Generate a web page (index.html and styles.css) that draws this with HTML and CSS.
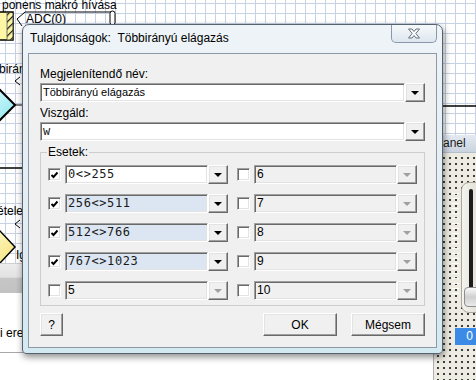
FILE: index.html
```html
<!DOCTYPE html>
<html lang="hu">
<head>
  <meta charset="UTF-8">
  <title>Tulajdonságok</title>
  <link rel="stylesheet" href="styles.css">
</head>
<body>
  <div class="desk">
    <!-- diagram sheet behind the dialog -->
    <div class="sheet">
      <svg class="diagram" width="476" height="263" viewBox="0 0 476 263">
        <defs>
          <pattern id="hatch" width="5" height="5" patternUnits="userSpaceOnUse" patternTransform="rotate(45)">
            <rect width="5" height="5" fill="#fdf6a4"/>
            <rect width="1.2" height="5" fill="#222"/>
          </pattern>
          <linearGradient id="cyan" x1="0" y1="0" x2="1" y2="1">
            <stop offset="0" stop-color="#d8fbfd"/>
            <stop offset="1" stop-color="#8fe6ef"/>
          </linearGradient>
          <linearGradient id="yellow" x1="0" y1="0" x2="1" y2="1">
            <stop offset="0" stop-color="#fffbd0"/>
            <stop offset="1" stop-color="#f5e27a"/>
          </linearGradient>
        </defs>
        <text class="dg-text" x="2" y="9">ponens makró hívása</text>
        <rect x="-3" y="12" width="16" height="28" fill="#fdf6a4" stroke="#000" stroke-width="1.5"/>
        <rect x="7" y="13" width="5.5" height="26.5" fill="url(#hatch)"/>
        <line x1="7" y1="12" x2="7" y2="40" stroke="#555" stroke-width="0.8"/>
        <path d="M22 26 L17 19 L25 12 L112 12" fill="none" stroke="#000" stroke-width="1"/>
        <rect x="110" y="11" width="5" height="14" rx="2.5" fill="#fff" stroke="#000" stroke-width="1"/>
        <text class="dg-text" x="26" y="23">ADC(0)</text>
        <text class="dg-text" x="-1" y="73">birán</text>
        <path d="M20 77 L15 81 L20 85" fill="none" stroke="#000" stroke-width="1"/>
        <polygon points="-15,105 0,90 15,105 0,120" fill="url(#cyan)" stroke="#000" stroke-width="2"/>
        <line x1="15" y1="105" x2="25" y2="105" stroke="#000" stroke-width="1"/>
        <line x1="0" y1="168" x2="25" y2="168" stroke="#000" stroke-width="1.5"/>
        <text class="dg-text" x="-3" y="215">ételes</text>
        <path d="M20 220 L15 224 L20 228" fill="none" stroke="#000" stroke-width="1"/>
        <polygon points="-16,247 0,231 15,247 0,263" fill="url(#yellow)" stroke="#000" stroke-width="1.5"/>
        <text class="dg-text" x="16" y="259">Ig</text>
        <line x1="436" y1="106" x2="476" y2="106" stroke="#000" stroke-width="1.5"/>
      </svg>
    </div>
    <div class="statusbar"></div>
    <div class="log">
      <span class="log-text">i ere</span>
    </div>

    <!-- panel on the right -->
    <div class="panel">
      <div class="panel-head">Panel</div>
      <div class="panel-body">
        <div class="ticks"></div>
        <div class="slider">
          <div class="track"></div>
          <div class="thumb"></div>
        </div>
        <div class="value">0</div>
      </div>
    </div>

    <!-- properties dialog -->
    <div class="dialog">
      <div class="titlebar">
        <span class="title">Tulajdonságok:  Többirányú elágazás</span>
        <div class="close">
          <svg width="14" height="11" viewBox="0 0 14 11">
            <path d="M1.5 1 H5 L7 3.5 L9 1 H12.5 L8.8 5.5 L12.5 10 H9 L7 7.5 L5 10 H1.5 L5.2 5.5 Z" fill="#fbfcfd" stroke="#66707c" stroke-width="1"/>
          </svg>
        </div>
      </div>
      <div class="client">
        <label class="lbl">Megjelenítendő név:</label>
        <div class="combo">
          <div class="field">Többirányú elágazás</div>
          <div class="drop"></div>
        </div>
        <label class="lbl second">Viszgáld:</label>
        <div class="combo">
          <div class="field mono">w</div>
          <div class="drop"></div>
        </div>

        <fieldset class="group">
          <legend>Esetek:</legend>
          <div class="cases">
            <div class="case">
              <div class="half">
                <span class="cb"><svg width="9" height="8" viewBox="0 0 9 8"><polyline points="1.5,4 3.5,6 7.5,1.5" fill="none" stroke="#000" stroke-width="1.9"/></svg></span>
                <div class="combo"><div class="field mono">0&lt;&gt;255</div><div class="drop"></div></div>
              </div>
              <div class="half">
                <span class="cb"></span>
                <div class="combo"><div class="field off">6</div><div class="drop off"></div></div>
              </div>
            </div>
            <div class="case">
              <div class="half">
                <span class="cb"><svg width="9" height="8" viewBox="0 0 9 8"><polyline points="1.5,4 3.5,6 7.5,1.5" fill="none" stroke="#000" stroke-width="1.9"/></svg></span>
                <div class="combo"><div class="field mono hl">256&lt;&gt;511</div><div class="drop"></div></div>
              </div>
              <div class="half">
                <span class="cb"></span>
                <div class="combo"><div class="field off">7</div><div class="drop off"></div></div>
              </div>
            </div>
            <div class="case">
              <div class="half">
                <span class="cb"><svg width="9" height="8" viewBox="0 0 9 8"><polyline points="1.5,4 3.5,6 7.5,1.5" fill="none" stroke="#000" stroke-width="1.9"/></svg></span>
                <div class="combo"><div class="field mono hl">512&lt;&gt;766</div><div class="drop"></div></div>
              </div>
              <div class="half">
                <span class="cb"></span>
                <div class="combo"><div class="field off">8</div><div class="drop off"></div></div>
              </div>
            </div>
            <div class="case">
              <div class="half">
                <span class="cb"><svg width="9" height="8" viewBox="0 0 9 8"><polyline points="1.5,4 3.5,6 7.5,1.5" fill="none" stroke="#000" stroke-width="1.9"/></svg></span>
                <div class="combo"><div class="field mono hl">767&lt;&gt;1023</div><div class="drop"></div></div>
              </div>
              <div class="half">
                <span class="cb"></span>
                <div class="combo"><div class="field off">9</div><div class="drop off"></div></div>
              </div>
            </div>
            <div class="case">
              <div class="half">
                <span class="cb"></span>
                <div class="combo"><div class="field off">5</div><div class="drop off"></div></div>
              </div>
              <div class="half">
                <span class="cb"></span>
                <div class="combo"><div class="field off">10</div><div class="drop off"></div></div>
              </div>
            </div>
          </div>
        </fieldset>

        <div class="actions">
          <button class="btn help">?</button>
          <button class="btn wide ok">OK</button>
          <button class="btn wide">Mégsem</button>
        </div>
      </div>
    </div>
  </div>
</body>
</html>
```
FILE: styles.css
```css
body {
  margin: 0;
  font-family: "Liberation Sans", Arial, sans-serif;
  background: #fff;
}
.desk {
  position: relative;
  width: 476px;
  height: 380px;
  overflow: hidden;
  background: #fff;
}

/* diagram sheet */
.sheet {
  height: 263px;
  background-color: #fff;
  background-image:
    linear-gradient(to right, #c6d2e4 1px, transparent 1px),
    linear-gradient(to bottom, #c6d2e4 1px, transparent 1px);
  background-size: 10px 10px;
  background-position: 5px 3px;
}
.diagram {
  display: block;
}
.dg-text {
  font: 12px "Liberation Sans", Arial, sans-serif;
  fill: #000;
}
.statusbar {
  height: 30px;
  background: linear-gradient(#ececec 0, #e2e2e2 45%, #c6c6c6 50%, #c2c2c2 100%);
  border-top: 1px solid #cfcfcf;
  box-sizing: border-box;
}
.log {
  height: 60px;
  border-bottom: 1px solid #a8a8a8;
  box-sizing: border-box;
  padding-top: 33px;
  font-size: 12px;
}

/* right panel */
.panel {
  position: absolute;
  left: 433px;
  top: 135px;
  width: 43px;
  height: 245px;
  display: flex;
  flex-direction: column;
  border-left: 1px solid #b0b0b0;
}
.panel-head {
  height: 17px;
  line-height: 17px;
  padding-left: 1px;
  font-size: 12px;
  color: #1a1a1a;
  background: linear-gradient(#e4eaf1, #c9d3df);
  border-bottom: 1px solid #b4bfcc;
}
.panel-body {
  flex: 1;
  position: relative;
  background-color: #eeece2;
  background-image: radial-gradient(circle, #3a3a3a 0.7px, transparent 1px);
  background-size: 6px 6px;
  background-position: 1px 2px;
  padding-top: 29px;
}
.ticks {
  position: absolute;
  left: 18px;
  top: 40px;
  width: 7px;
  height: 102px;
  background-image: linear-gradient(to bottom, #fff 1px, transparent 1px);
  background-size: 7px 5px;
  opacity: 0.9;
}
.slider {
  position: relative;
  margin-left: 27px;
  width: 22px;
  height: 131px;
  border: 1px solid #a9a69a;
  border-radius: 8px;
  background: linear-gradient(to right, #f4f3ee, #dcdad0);
  box-sizing: border-box;
}
.track {
  position: absolute;
  left: 7px;
  top: 6px;
  width: 4px;
  height: 112px;
  background: #1c1c1c;
  border-radius: 2px;
}
.thumb {
  position: absolute;
  left: 2px;
  top: 104px;
  width: 16px;
  height: 20px;
  border-radius: 4px;
  border: 1px solid #8d8d8d;
  background: linear-gradient(#fafafa, #cfcfcf 50%, #eaeaea);
  box-sizing: border-box;
}
.value {
  margin: 15px 0 0 21px;
  height: 17px;
  line-height: 17px;
  background: #3b8be6;
  color: #fff;
  font-size: 12px;
  text-align: right;
  padding-right: 4px;
}

/* dialog window */
.dialog {
  position: absolute;
  left: 22px;
  top: 24px;
  width: 421px;
  height: 330px;
  box-sizing: border-box;
  border: 1px solid #56636f;
  border-radius: 7px 7px 4px 4px;
  background: linear-gradient(#eef4f8, #e2ecf3 60%, #d3e9f1);
  box-shadow: 1px 3px 7px rgba(0,0,0,0.45);
  display: flex;
  flex-direction: column;
}
.titlebar {
  height: 28px;
  display: flex;
  align-items: flex-start;
  padding-left: 7px;
}
.title {
  font-size: 12px;
  line-height: 27px;
  color: #000;
  white-space: pre;
}
.close {
  width: 46px;
  height: 18px;
  margin-left: auto;
  margin-right: 5px;
  box-sizing: border-box;
  border: 1px solid #8b98a7;
  border-top: none;
  border-radius: 0 0 5px 5px;
  background: linear-gradient(#f6f9fb, #dde6ee);
  display: flex;
  align-items: center;
  justify-content: center;
}
.client {
  flex: 1;
  margin: 0 5px 5px;
  background: #f0f0f0;
  border: 1px solid #8c99a6;
  padding: 13px 11px 11px;
  font-size: 12px;
}
.lbl {
  display: block;
  line-height: 15px;
  margin-bottom: 1px;
  color: #000;
}
.lbl.second {
  margin-top: 4px;
}

/* combo box pieces */
.combo {
  display: flex;
  height: 19px;
}
.field {
  flex: 1;
  min-width: 0;
  box-sizing: border-box;
  border: 1px solid;
  border-color: #a0a0a0 #fff #fff #a0a0a0;
  box-shadow: inset 1px 1px #696969, inset -1px -1px #e3e3e3;
  background: #fff;
  padding-left: 2px;
  font-size: 11px;
  line-height: 17px;
  color: #000;
  white-space: nowrap;
  overflow: hidden;
}
.field.mono {
  font-family: "DejaVu Sans Mono", "Liberation Mono", monospace;
  font-size: 12px;
  letter-spacing: 0.6px;
  color: #1a1a1a;
}
.field.hl {
  background: #dce6f3;
}
.field.off {
  background: #f0f0f0;
  font-size: 12px;
}
.drop {
  width: 20px;
  box-sizing: border-box;
  border: 1px solid;
  border-color: #fff #696969 #696969 #fff;
  box-shadow: inset -1px -1px #a0a0a0, inset 1px 1px #e3e3e3;
  background: #f0f0f0;
  display: flex;
  align-items: center;
  justify-content: center;
}
.drop::after {
  content: "";
  border-left: 4px solid transparent;
  border-right: 4px solid transparent;
  border-top: 4px solid #000;
  margin-top: 1px;
}
.drop.off::after {
  border-top-color: #a0a0a0;
}

/* cases group */
.group {
  margin: 4px 0 0;
  padding: 6px 7px 5px;
  border: 1px solid #cdcdcd;
  min-width: 0;
}
.group legend {
  padding: 0 1px;
  margin-left: -1px;
  line-height: 14px;
  font-size: 12px;
}
.cases {
  display: flex;
  flex-direction: column;
  gap: 10px;
}
.case {
  display: flex;
  gap: 9px;
}
.half {
  width: 180px;
  display: flex;
  align-items: center;
  gap: 4px;
}
.half .combo {
  flex: 1;
}
.cb {
  width: 13px;
  height: 13px;
  box-sizing: border-box;
  border: 1px solid;
  border-color: #a0a0a0 #fff #fff #a0a0a0;
  box-shadow: inset 1px 1px #696969, inset -1px -1px #e3e3e3;
  background: #fff;
  display: flex;
  align-items: center;
  justify-content: center;
}
.cb svg {
  display: block;
}

/* bottom buttons */
.actions {
  display: flex;
  gap: 14px;
  margin-top: 7px;
}
.btn {
  height: 23px;
  box-sizing: border-box;
  border: 1px solid;
  border-color: #fff #696969 #696969 #fff;
  box-shadow: inset -1px -1px #a0a0a0, inset 1px 1px #e3e3e3;
  background: #f0f0f0;
  font: 12px "Liberation Sans", Arial, sans-serif;
  color: #000;
  padding: 0;
}
.btn.help {
  width: 23px;
}
.btn.wide {
  width: 74px;
}
.btn.ok {
  margin-left: auto;
}
```
